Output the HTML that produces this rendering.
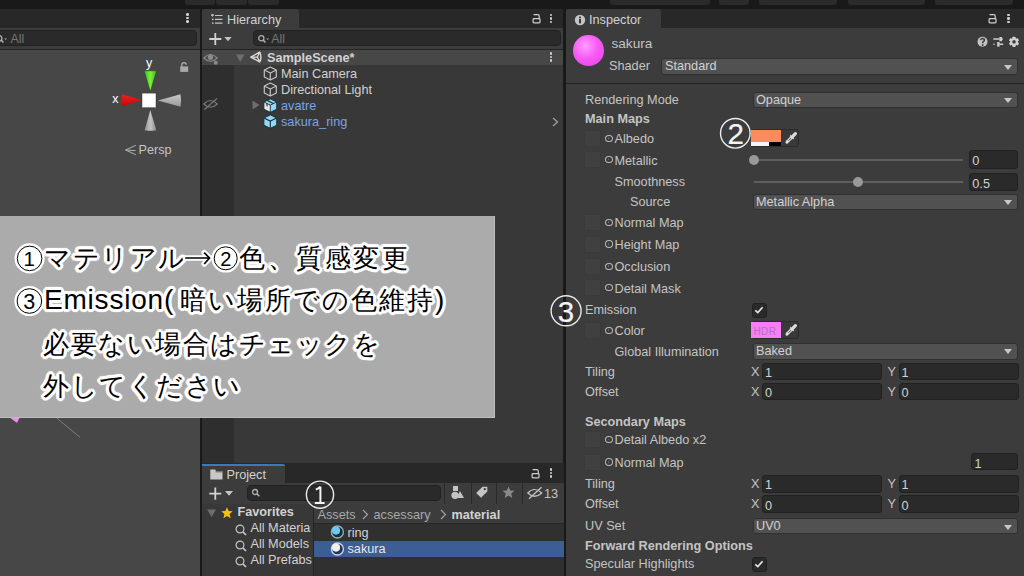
<!DOCTYPE html>
<html><head><meta charset="utf-8">
<style>
*{box-sizing:border-box;margin:0;padding:0}
html,body{width:1024px;height:576px;overflow:hidden;background:#191919}
body{position:relative;font-family:"Liberation Sans",sans-serif;color:#c4c4c4;font-size:12.7px}
.a{position:absolute}
.t{position:absolute;white-space:nowrap;line-height:16px;height:16px;margin-top:0px}
.b{font-weight:bold}
.tbtn{position:absolute;top:-6px;height:10.5px;background:#2b2b2b;border-radius:0 0 3px 3px}
.tabbar{position:absolute;background:#282828}
.tab{position:absolute;background:#3c3c3c;border-radius:3px 3px 0 0}
.tool{position:absolute;background:#3c3c3c;border-bottom:1.5px solid #232323}
.search{position:absolute;background:#2a2a2a;border:1px solid #212121;border-radius:4px}
.kebab{position:absolute;width:3px;height:11px}
.kebab i{position:absolute;left:0.3px;width:2.5px;height:2.5px;border-radius:50%;background:#d0d0d0}
.dd{position:absolute;background:#515151;border:1px solid #303030;border-radius:3px;height:17px}
.dd span{position:absolute;left:2px;top:0;line-height:15px;color:#d2d2d2}
.dd b{position:absolute;right:5px;top:5.5px;width:0;height:0;border-left:4.3px solid transparent;border-right:4.3px solid transparent;border-top:5.2px solid #c8c8c8}
.fld{position:absolute;background:#2a2a2a;border:1px solid #212121;border-radius:3px;height:18px}
.fld span{position:absolute;left:2px;top:1.5px;line-height:16px;color:#d2d2d2}
.slot{position:absolute;left:584.3px;width:17px;height:17px;background:#404040;border:1px solid #3a3a3a}
.dot{position:absolute;width:7.8px;height:7.6px;border:1.5px solid #b8b8b8;border-radius:50%}
.dot:after{content:"";position:absolute;left:1.9px;top:1.9px;width:1.6px;height:1.6px;background:#707070;border-radius:50%}
.chk{position:absolute;width:15px;height:15px;background:#2a2a2a;border:1px solid #212121;border-radius:3px}
.ann{position:absolute;width:30px;height:30px;border-radius:50%;border:2px solid #fff;background:transparent}
</style></head><body>

<!-- top toolbar buttons -->
<div class="tbtn" style="left:185px;width:30px"></div>
<div class="tbtn" style="left:216px;width:31px"></div>
<div class="tbtn" style="left:248px;width:31px"></div>
<div class="tbtn" style="left:610px;width:99.5px"></div>
<div class="tbtn" style="left:719px;width:30px"></div>
<div class="tbtn" style="left:759px;width:78px"></div>
<div class="tbtn" style="left:847.5px;width:77.5px"></div>
<div class="tbtn" style="left:935px;width:78px"></div>

<!-- ============ SCENE PANEL ============ -->
<div class="tabbar" style="left:0;top:9px;width:200px;height:19px"></div>
<div class="kebab" style="left:186px;top:13px"><i style="top:0"></i><i style="top:3.7px"></i><i style="top:7.4px"></i></div>
<div class="tool" style="left:0;top:28px;width:200px;height:22px"></div>
<div class="search" style="left:-10px;top:30px;width:207px;height:16px"></div>
<div class="t" style="left:10.5px;top:31px;color:#767676;font-size:12.3px">All</div>
<div class="a" style="left:0;top:50px;width:200px;height:526px;background:#474747"></div>
<!-- scene toolbar search icon -->
<svg class="a" style="left:-3px;top:33.5px" width="12" height="11" viewBox="0 0 12 11"><circle cx="2.3" cy="4.3" r="2.6" fill="none" stroke="#b0b0b0" stroke-width="1.3"/><path d="M4.2 6.2 L6.4 8.4" stroke="#b0b0b0" stroke-width="1.6"/><path d="M7.3 4.5 H10 L8.65 6 Z" fill="#b0b0b0"/></svg>
<!-- gizmo -->
<svg class="a" style="left:105px;top:52px" width="90" height="108" viewBox="105 52 90 108">
 <defs>
  <linearGradient id="gg" x1="0" y1="0" x2="1" y2="0"><stop offset="0" stop-color="#3cc21a"/><stop offset="0.5" stop-color="#78f03c"/><stop offset="1" stop-color="#3cb818"/></linearGradient>
  <linearGradient id="rg" x1="0" y1="0" x2="0" y2="1"><stop offset="0" stop-color="#f02020"/><stop offset="1" stop-color="#c00808"/></linearGradient>
  <linearGradient id="wg" x1="0" y1="0" x2="0" y2="1"><stop offset="0" stop-color="#c8c8c8"/><stop offset="1" stop-color="#9a9a9a"/></linearGradient>
  <linearGradient id="bg2" x1="0" y1="0" x2="1" y2="0"><stop offset="0" stop-color="#909090"/><stop offset="0.5" stop-color="#c4c4c4"/><stop offset="1" stop-color="#8c8c8c"/></linearGradient>
 </defs>
 <path d="M144.3 70.8 L156.6 70.8 L150.3 91.5 Z" fill="url(#gg)" stroke="#2a4a1a" stroke-width="0.5"/>
 <path d="M122.2 94.2 L141.8 100.1 L122.2 106.2 Q120.8 100.2 122.2 94.2 Z" fill="url(#rg)"/>
 <path d="M180.5 94.2 L158 100.4 L180.5 106.7 Q181.8 100.4 180.5 94.2 Z" fill="url(#wg)"/>
 <path d="M150.3 109.9 L156.3 130.2 Q150.3 131.5 144.6 130.2 Z" fill="url(#bg2)"/>
 <rect x="142" y="93.1" width="14" height="14.6" fill="#ffffff" stroke="#222" stroke-width="0.4"/>
 <text x="149" y="67.3" font-family="Liberation Sans" font-size="12.5" fill="#fff" text-anchor="middle">y</text>
 <text x="115.4" y="103" font-family="Liberation Sans" font-size="12.5" fill="#fff" text-anchor="middle">x</text>
 <path d="M181.8 67 V64.8 Q181.8 62.8 184 62.8 Q186.2 62.8 186.2 64.8" fill="none" stroke="#a8a8a8" stroke-width="1.4"/>
 <rect x="180.2" y="66.4" width="8" height="5.5" fill="#a8a8a8"/>
 <path d="M135.8 145.3 L125.6 150 L135.8 154.7 M125.6 150 L135.5 150.6" fill="none" stroke="#b4b4b4" stroke-width="1"/>
</svg>
<div class="t" style="left:138.5px;top:142.3px;color:#c4c4c4">Persp</div>
<svg class="a" style="left:0;top:410px" width="100" height="40" viewBox="0 410 100 40"><path d="M8.6 417 L20.3 417 L17 423.2 Z" fill="#f58cf3" stroke="#3a2a3a" stroke-width="0.4"/><path d="M56 417.5 L80 437.3" stroke="#8c8c8c" stroke-width="0.8"/></svg>


<!-- separator -->
<div class="a" style="left:200px;top:9px;width:2px;height:567px;background:#191919"></div>

<!-- ============ HIERARCHY ============ -->
<div class="tabbar" style="left:202px;top:9px;width:361px;height:19px"></div>
<div class="tab" style="left:202px;top:9px;width:97px;height:19px"></div>
<div class="t" style="left:227px;top:12px;color:#d2d2d2">Hierarchy</div>
<div class="tool" style="left:202px;top:28px;width:361px;height:22px"></div>
<div class="search" style="left:253px;top:30px;width:308px;height:16px"></div>
<div class="t" style="left:271.3px;top:31px;color:#767676;font-size:12.3px">All</div>
<div class="a" style="left:202px;top:50px;width:361px;height:413px;background:#383838"></div>
<div class="a" style="left:202px;top:65px;width:32px;height:398px;background:#2e2e2e"></div>
<div class="a" style="left:202px;top:50px;width:361px;height:15px;background:#474747"></div>
<div class="t b" style="left:267px;top:49.5px;color:#d2d2d2">SampleScene*</div>
<div class="t" style="left:281px;top:66px;color:#d2d2d2">Main Camera</div>
<div class="t" style="left:281px;top:82px;color:#d2d2d2">Directional Light</div>
<div class="t" style="left:281px;top:98px;color:#7ba4e0">avatre</div>
<div class="t" style="left:281px;top:114px;color:#7ba4e0">sakura_ring</div>
<!-- hierarchy icons -->
<svg class="a" style="left:210px;top:14px" width="13" height="11" viewBox="0 0 13 11"><path d="M1 1.2 H4 M2.5 0 V2.6 M5 1.5 H12.5 M5 5.3 H12.5 M5 9.1 H12.5" stroke="#c4c4c4" stroke-width="1.2"/><rect x="2" y="4.6" width="1.5" height="1.5" fill="#c4c4c4"/><rect x="2" y="8.4" width="1.5" height="1.5" fill="#c4c4c4"/></svg>
<svg class="a" style="left:529.5px;top:12px" width="12" height="13" viewBox="0 0 12 13"><path d="M3.6 2.6 H7.6 Q9.3 2.6 9.3 4.4 V6.6" fill="none" stroke="#d0d0d0" stroke-width="1.2"/><rect x="3.1" y="6.7" width="6.9" height="4.2" rx="0.8" fill="none" stroke="#d0d0d0" stroke-width="1.2"/></svg>
<div class="kebab" style="left:549.5px;top:13.5px"><i style="top:0"></i><i style="top:3.7px"></i><i style="top:7.4px"></i></div>
<svg class="a" style="left:208px;top:32.3px" width="26" height="14" viewBox="0 0 26 14"><path d="M7.3 1 V13 M1.3 7 H13.3" stroke="#d2d2d2" stroke-width="1.8"/><path d="M16.3 5 H23.7 L20 9.2 Z" fill="#c4c4c4"/></svg>
<svg class="a" style="left:257px;top:33.5px" width="14" height="11" viewBox="0 0 14 11"><circle cx="4.3" cy="4.3" r="2.6" fill="none" stroke="#b0b0b0" stroke-width="1.3"/><path d="M6.2 6.2 L8.4 8.4" stroke="#b0b0b0" stroke-width="1.6"/><path d="M9.3 4.5 H12 L10.65 6 Z" fill="#b0b0b0"/></svg>
<!-- scene row icons -->
<svg class="a" style="left:203px;top:52px" width="16" height="13" viewBox="0 0 16 13"><path d="M0.8 6 Q7.5 -1 14.3 6 Q7.5 12.5 0.8 6 Z" fill="none" stroke="#8a8a8a" stroke-width="1.1"/><circle cx="7.5" cy="5.3" r="2.7" fill="#8a8a8a"/><rect x="11" y="9" width="3.5" height="3.5" rx="0.5" fill="#8a8a8a"/></svg>
<svg class="a" style="left:236px;top:54px" width="9" height="9" viewBox="0 0 9 9"><path d="M0 0.5 H8.5 L4.25 8 Z" fill="#6e6e6e"/></svg>
<svg class="a" style="left:246px;top:48px" width="20" height="18" viewBox="246 48 20 18"><path d="M250.8 57.1 L259.7 52.1 Q262.2 57.1 259.7 61.9 Z" fill="none" stroke="#dcdcdc" stroke-width="1.4" stroke-linejoin="round"/><path d="M257.4 57.1 L250.8 57.1 M257.4 57.1 L259.7 52.1 M257.4 57.1 L259.7 61.9" stroke="#dcdcdc" stroke-width="1.3"/></svg>
<div class="kebab" style="left:549.5px;top:52px"><i style="top:0"></i><i style="top:3.7px"></i><i style="top:7.4px"></i></div>
<!-- cubes -->
<svg class="a" style="left:263px;top:66px" width="15" height="15" viewBox="0 0 15 15"><path d="M7.3 1 L13.3 4 V11 L7.3 14 L1.3 11 V4 Z M1.3 4 L7.3 7 L13.3 4 M7.3 7 V14" fill="none" stroke="#c4c4c4" stroke-width="1.2" stroke-linejoin="round"/></svg>
<svg class="a" style="left:263px;top:82px" width="15" height="15" viewBox="0 0 15 15"><path d="M7.3 1 L13.3 4 V11 L7.3 14 L1.3 11 V4 Z M1.3 4 L7.3 7 L13.3 4 M7.3 7 V14" fill="none" stroke="#c4c4c4" stroke-width="1.2" stroke-linejoin="round"/></svg>
<svg class="a" style="left:263px;top:98px" width="15" height="15" viewBox="0 0 15 15"><path d="M7.3 0.9 L13.7 4 V11.2 L7.3 14.3 L0.9 11.2 V4 Z" fill="#8edaf8" stroke="#1e2e36" stroke-width="0.9" stroke-linejoin="round"/><path d="M0.9 4 L7.3 7.1 V14.3 L0.9 11.2 Z" fill="#e8e8e8" stroke="#1e2e36" stroke-width="0.9" stroke-linejoin="round"/><path d="M7.3 7.1 L13.7 4" stroke="#1e2e36" stroke-width="0.9"/><path d="M4.2 2.4 L10.4 5.5" stroke="#1e2e36" stroke-width="1.2"/><path d="M3.4 5.2 V8 L4.6 8.5 V5.8 Z" fill="#303030"/></svg>
<svg class="a" style="left:263px;top:114px" width="15" height="15" viewBox="0 0 15 15"><path d="M7.3 0.9 L13.7 4 V11.2 L7.3 14.3 L0.9 11.2 V4 Z" fill="#8edaf8" stroke="#1e2e36" stroke-width="0.9" stroke-linejoin="round"/><path d="M0.9 4 L7.3 7.1 L13.7 4 M7.3 7.1 V14.3" fill="none" stroke="#1e2e36" stroke-width="1.1"/></svg>
<svg class="a" style="left:252px;top:100px" width="8" height="10" viewBox="0 0 8 10"><path d="M0.5 0.5 L7.5 5 L0.5 9.5 Z" fill="#6e6e6e"/></svg>
<svg class="a" style="left:203px;top:97px" width="16" height="14" viewBox="0 0 16 14"><path d="M0.8 7 Q7.5 0 14.3 7 Q7.5 13.5 0.8 7 Z" fill="none" stroke="#7a7a7a" stroke-width="1.1"/><path d="M1.5 12.5 L14 1.5" stroke="#7a7a7a" stroke-width="1.2"/></svg>
<svg class="a" style="left:552px;top:117px" width="7" height="10" viewBox="0 0 7 10"><path d="M1 1 L5.5 5 L1 9" fill="none" stroke="#a0a0a0" stroke-width="1.3"/></svg>


<!-- separator -->
<div class="a" style="left:563px;top:9px;width:3px;height:567px;background:#191919"></div>

<!-- ============ INSPECTOR ============ -->
<div class="tabbar" style="left:566px;top:9px;width:458px;height:19px"></div>
<div class="tab" style="left:566px;top:9px;width:95px;height:19px"></div>
<div class="t" style="left:589px;top:12px;color:#d2d2d2">Inspector</div>
<div class="a" style="left:566px;top:28px;width:458px;height:548px;background:#3c3c3c"></div>
<div class="a" style="left:566px;top:83px;width:458px;height:1px;background:#232323"></div>
<!-- inspector header -->
<div class="a" style="left:573px;top:35px;width:30.5px;height:30.5px;border-radius:50%;background:radial-gradient(circle at 40% 35%,#ff9cff 0%,#f75cf5 45%,#e83ce6 100%)"></div>
<div class="t" style="left:611.5px;top:36px;font-size:13.6px;color:#c4c4c4">sakura</div>
<div class="t" style="left:609px;top:58.3px;color:#c4c4c4">Shader</div>
<div class="dd" style="left:661px;top:58px;width:357px;height:16.5px"><span style="left:3px">Standard</span><b></b></div>
<!-- help / preset / gear icons -->
<svg class="a" style="left:976px;top:35px" width="46" height="14" viewBox="0 0 46 14">
 <circle cx="6.5" cy="6.8" r="5" fill="#c4c4c4"/>
 <path d="M4.8 5.3 Q4.8 3.4 6.6 3.4 Q8.4 3.4 8.4 5.1 Q8.4 6.2 7.1 6.8 L6.7 7.2 L6.7 8.2" fill="none" stroke="#3c3c3c" stroke-width="1.5"/>
 <circle cx="6.7" cy="10" r="0.9" fill="#3c3c3c"/>
 <path d="M17.3 3.9 H23.6 M23.4 9.3 H27.2" stroke="#d0d0d0" stroke-width="1.5"/>
 <path d="M23.4 2 H25.6 L26.9 4.1 L25.6 6.2 H23.4 Z" fill="#d0d0d0"/>
 <rect x="21.2" y="7" width="2.4" height="4.6" fill="#d0d0d0"/>
 <circle cx="18.1" cy="9.3" r="0.8" fill="#d0d0d0"/>
 <g transform="translate(38,6.8)" fill="#d0d0d0">
  <circle r="3.9"/>
  <rect x="-1.5" y="-5.1" width="3" height="10.2" rx="0.6"/>
  <rect x="-1.5" y="-5.1" width="3" height="10.2" rx="0.6" transform="rotate(60)"/>
  <rect x="-1.5" y="-5.1" width="3" height="10.2" rx="0.6" transform="rotate(120)"/>
  <rect x="-1.6" y="-1.6" width="3.2" height="3.2" rx="1" fill="#3c3c3c"/>
 </g>
</svg>
<!-- tab icons -->
<svg class="a" style="left:574px;top:14px" width="12" height="12" viewBox="0 0 12 12"><circle cx="6" cy="6" r="5.2" fill="#c4c4c4"/><rect x="5.1" y="5" width="1.8" height="4.3" fill="#282828"/><rect x="5.1" y="2.6" width="1.8" height="1.6" fill="#282828"/></svg>
<svg class="a" style="left:986px;top:12px" width="12" height="13" viewBox="0 0 12 13"><path d="M3.6 2.6 H7.6 Q9.3 2.6 9.3 4.4 V6.6" fill="none" stroke="#d0d0d0" stroke-width="1.2"/><rect x="3.1" y="6.7" width="6.9" height="4.2" rx="0.8" fill="none" stroke="#d0d0d0" stroke-width="1.2"/></svg>
<div class="kebab" style="left:1007px;top:13.5px"><i style="top:0"></i><i style="top:3.7px"></i><i style="top:7.4px"></i></div>

<div class="t" style="left:585px;top:91.9px">Rendering Mode</div>
<div class="t b" style="left:585px;top:111.15px">Main Maps</div>
<div class="t" style="left:614.5px;top:131.15px">Albedo</div>
<div class="slot" style="top:130px"></div>
<div class="dot" style="left:605px;top:134.5px"></div>
<div class="t" style="left:614.5px;top:152.55px">Metallic</div>
<div class="slot" style="top:151.4px"></div>
<div class="dot" style="left:605px;top:155.9px"></div>
<div class="t" style="left:614.5px;top:174.15px">Smoothness</div>
<div class="t" style="left:630px;top:194.15px">Source</div>
<div class="t" style="left:614.5px;top:215.15px">Normal Map</div>
<div class="slot" style="top:214px"></div>
<div class="dot" style="left:605px;top:218.5px"></div>
<div class="t" style="left:614.5px;top:236.75px">Height Map</div>
<div class="slot" style="top:235.6px"></div>
<div class="dot" style="left:605px;top:240.1px"></div>
<div class="t" style="left:614.5px;top:259.15px">Occlusion</div>
<div class="slot" style="top:258px"></div>
<div class="dot" style="left:605px;top:262.5px"></div>
<div class="t" style="left:614.5px;top:280.55px">Detail Mask</div>
<div class="slot" style="top:279.4px"></div>
<div class="dot" style="left:605px;top:283.9px"></div>
<div class="t" style="left:585px;top:302.15px">Emission</div>
<div class="t" style="left:614.5px;top:323.15px">Color</div>
<div class="slot" style="top:322px"></div>
<div class="dot" style="left:605px;top:326.5px"></div>
<div class="t" style="left:614.5px;top:343.75px">Global Illumination</div>
<div class="t" style="left:585px;top:363.75px">Tiling</div>
<div class="t" style="left:585px;top:383.75px">Offset</div>
<div class="t b" style="left:585px;top:413.75px">Secondary Maps</div>
<div class="t" style="left:614.5px;top:432.35px">Detail Albedo x2</div>
<div class="slot" style="top:431.2px"></div>
<div class="dot" style="left:605px;top:435.7px"></div>
<div class="t" style="left:614.5px;top:455.05px">Normal Map</div>
<div class="slot" style="top:453.9px"></div>
<div class="dot" style="left:605px;top:458.4px"></div>
<div class="t" style="left:585px;top:476.15px">Tiling</div>
<div class="t" style="left:585px;top:496.15px">Offset</div>
<div class="t" style="left:585px;top:518.15px">UV Set</div>
<div class="t b" style="left:585px;top:537.55px">Forward Rendering Options</div>
<div class="t" style="left:585px;top:555.85px">Specular Highlights</div>

<!-- dropdowns -->
<div class="dd" style="left:753px;top:91.5px;width:265px;height:16.5px"><span>Opaque</span><b></b></div>
<div class="dd" style="left:753px;top:193.7px;width:265px;height:16.5px"><span>Metallic Alpha</span><b></b></div>
<div class="dd" style="left:753px;top:342.5px;width:265px;height:17px"><span>Baked</span><b></b></div>
<div class="dd" style="left:753px;top:518px;width:265px;height:16px"><span>UV0</span><b></b></div>

<!-- albedo swatch -->
<div class="a" style="left:750.5px;top:128.8px;width:48.5px;height:17.8px;background:#393939;border:1px solid #2b2b2b;border-radius:3px"></div>
<div class="a" style="left:751.3px;top:129.6px;width:29.8px;height:12px;background:#fa8b5c"></div>
<div class="a" style="left:751.3px;top:141.6px;width:17.5px;height:4.4px;background:#f4f4f4"></div>
<div class="a" style="left:768.8px;top:141.6px;width:12.3px;height:4.4px;background:#000"></div>
<!-- emission swatch -->
<div class="a" style="left:750.5px;top:320.8px;width:48.5px;height:17.8px;background:#393939;border:1px solid #2b2b2b;border-radius:3px"></div>
<div class="a" style="left:751.3px;top:321.6px;width:29.8px;height:16.4px;background:#f77ff5"></div>
<div class="t" style="left:753.6px;top:323.6px;font-size:10px;letter-spacing:0.3px;color:#b272bc">HDR</div>
<!-- eyedroppers -->
<svg class="a" style="left:783px;top:129.5px" width="15" height="16" viewBox="0 0 15 16"><path d="M3.9 12.1 L8.6 7.4" stroke="#dcdcdc" stroke-width="2.9" stroke-linecap="round"/><path d="M5.6 10.4 L7.6 8.4" stroke="#3a3a3a" stroke-width="0.9" stroke-linecap="round"/><path d="M7.2 5.3 L10.7 8.8" stroke="#dcdcdc" stroke-width="1.7"/><path d="M10 6.1 L12.4 3.7" stroke="#dcdcdc" stroke-width="3.2" stroke-linecap="round"/></svg>
<svg class="a" style="left:783px;top:321.5px" width="15" height="16" viewBox="0 0 15 16"><path d="M3.9 12.1 L8.6 7.4" stroke="#dcdcdc" stroke-width="2.9" stroke-linecap="round"/><path d="M5.6 10.4 L7.6 8.4" stroke="#3a3a3a" stroke-width="0.9" stroke-linecap="round"/><path d="M7.2 5.3 L10.7 8.8" stroke="#dcdcdc" stroke-width="1.7"/><path d="M10 6.1 L12.4 3.7" stroke="#dcdcdc" stroke-width="3.2" stroke-linecap="round"/></svg>

<!-- sliders -->
<div class="a" style="left:754px;top:159px;width:209px;height:2px;background:#5e5e5e"></div>
<div class="a" style="left:749.3px;top:155px;width:10px;height:10px;border-radius:50%;background:#999"></div>
<div class="fld" style="left:969.3px;top:150px;width:48.7px;height:18.7px"><span>0</span></div>
<div class="a" style="left:754px;top:181px;width:209px;height:2px;background:#5e5e5e"></div>
<div class="a" style="left:852.5px;top:176.8px;width:10px;height:10px;border-radius:50%;background:#999"></div>
<div class="fld" style="left:969.3px;top:173px;width:48.7px;height:17.5px"><span>0.5</span></div>

<!-- checkboxes -->
<div class="chk" style="left:752px;top:302.5px"></div>
<svg class="a" style="left:752px;top:302.5px" width="14" height="14" viewBox="0 0 14 14"><path d="M3.3 7.3 L5.8 9.6 L10.6 4.2" fill="none" stroke="#e6e6e6" stroke-width="1.7"/></svg>
<div class="chk" style="left:752px;top:557px"></div>
<svg class="a" style="left:752px;top:557px" width="14" height="14" viewBox="0 0 14 14"><path d="M3.3 7.3 L5.8 9.6 L10.6 4.2" fill="none" stroke="#e6e6e6" stroke-width="1.7"/></svg>

<!-- tiling / offset fields -->
<div class="t" style="left:751px;top:363.7px">X</div><div class="fld" style="left:762px;top:362.5px;width:120px;height:17.5px"><span style="left:2px">1</span></div>
<div class="t" style="left:887.5px;top:363.7px">Y</div><div class="fld" style="left:898.5px;top:362.5px;width:120px;height:17.5px"><span style="left:2px">1</span></div>
<div class="t" style="left:751px;top:383.7px">X</div><div class="fld" style="left:762px;top:382.5px;width:120px;height:17.5px"><span style="left:2px">0</span></div>
<div class="t" style="left:887.5px;top:383.7px">Y</div><div class="fld" style="left:898.5px;top:382.5px;width:120px;height:17.5px"><span style="left:2px">0</span></div>
<div class="fld" style="left:970.5px;top:453.3px;width:47.5px;height:17.2px"><span style="left:3px">1</span></div>
<div class="t" style="left:751px;top:476px">X</div><div class="fld" style="left:762px;top:474.5px;width:120px;height:18px"><span style="left:2px">1</span></div>
<div class="t" style="left:887.5px;top:476px">Y</div><div class="fld" style="left:898.5px;top:474.5px;width:120px;height:18px"><span style="left:2px">1</span></div>
<div class="t" style="left:751px;top:496px">X</div><div class="fld" style="left:762px;top:495px;width:120px;height:17.5px"><span style="left:2px">0</span></div>
<div class="t" style="left:887.5px;top:496px">Y</div><div class="fld" style="left:898.5px;top:495px;width:120px;height:17.5px"><span style="left:2px">0</span></div>


<!-- ============ PROJECT ============ -->
<div class="tabbar" style="left:202px;top:462.5px;width:361.5px;height:20px"></div>
<div class="tab" style="left:202px;top:463.8px;width:83px;height:19.7px;border-top:2.5px solid #3a79bb;border-radius:0 2px 0 0"></div>
<div class="t" style="left:226.5px;top:467px;color:#d2d2d2">Project</div>
<div class="a" style="left:563.5px;top:463px;width:2.5px;height:113px;background:#191919"></div>
<svg class="a" style="left:210px;top:469px" width="13" height="11" viewBox="0 0 13 11"><path d="M0.3 0.5 H5 L6.2 2 H12.5 V10.5 H0.3 Z" fill="#c8c8c8"/><path d="M5.5 2.8 H12.5" stroke="#3c3c3c" stroke-width="0.8"/></svg>
<svg class="a" style="left:528.5px;top:467px" width="12" height="13" viewBox="0 0 12 13"><path d="M3.6 2.6 H7.6 Q9.3 2.6 9.3 4.4 V6.6" fill="none" stroke="#d0d0d0" stroke-width="1.2"/><rect x="3.1" y="6.7" width="6.9" height="4.2" rx="0.8" fill="none" stroke="#d0d0d0" stroke-width="1.2"/></svg>
<div class="kebab" style="left:549.5px;top:468px"><i style="top:0"></i><i style="top:3.7px"></i><i style="top:7.4px"></i></div>
<!-- project toolbar -->
<div class="tool" style="left:202px;top:482.5px;width:361.5px;height:22px"></div>
<svg class="a" style="left:208px;top:487px" width="26" height="14" viewBox="0 0 26 14"><path d="M7.3 0.5 V12.8 M1.3 6.7 H13.3" stroke="#d2d2d2" stroke-width="1.8"/><path d="M17 4 H25 L21 8.8 Z" fill="#c4c4c4"/></svg>
<div class="search" style="left:247px;top:485px;width:194px;height:16px"></div>
<svg class="a" style="left:251px;top:488px" width="10" height="10" viewBox="0 0 10 10"><circle cx="4" cy="4" r="2.5" fill="none" stroke="#b0b0b0" stroke-width="1.3"/><path d="M5.8 5.8 L8.3 8.3" stroke="#b0b0b0" stroke-width="1.6"/></svg>
<div class="a" style="left:444px;top:482.5px;width:1px;height:21px;background:#2a2a2a"></div>
<div class="a" style="left:470.5px;top:482.5px;width:1px;height:21px;background:#2a2a2a"></div>
<div class="a" style="left:496px;top:482.5px;width:1px;height:21px;background:#2a2a2a"></div>
<div class="a" style="left:522px;top:482.5px;width:1px;height:21px;background:#2a2a2a"></div>
<svg class="a" style="left:450px;top:485px" width="15" height="15" viewBox="0 0 15 15"><rect x="3" y="1" width="5" height="5" fill="#c4c4c4"/><circle cx="5" cy="10.3" r="3.6" fill="#c4c4c4"/><path d="M10 6 L14 13 H6.5 Z" fill="#c4c4c4"/></svg>
<svg class="a" style="left:475px;top:485px" width="14" height="14" viewBox="0 0 14 14"><path d="M1.2 8 L7.5 1.7 H12.3 V6.5 L6 12.8 Z" fill="#c4c4c4"/><circle cx="9.8" cy="4.2" r="1.1" fill="#3c3c3c"/></svg>
<svg class="a" style="left:502px;top:486px" width="13" height="13" viewBox="0 0 13 13"><path d="M6.5 0.6 L8.2 4.6 L12.5 4.8 L9.2 7.6 L10.3 12 L6.5 9.6 L2.7 12 L3.8 7.6 L0.5 4.8 L4.8 4.6 Z" fill="#8a8a8a"/></svg>
<svg class="a" style="left:527px;top:486px" width="16" height="14" viewBox="0 0 16 14"><path d="M0.8 7 Q7.5 0 14.8 7 Q7.5 13.5 0.8 7 Z" fill="none" stroke="#c4c4c4" stroke-width="1.2"/><path d="M2 12.8 L14.5 1.2" stroke="#c4c4c4" stroke-width="1.3"/></svg>
<div class="t" style="left:544px;top:485.8px;color:#c4c4c4">13</div>
<!-- project left pane -->
<div class="a" style="left:202px;top:504px;width:111px;height:72px;background:#383838"></div>
<div class="a" style="left:313px;top:504px;width:1px;height:72px;background:#242424"></div>
<svg class="a" style="left:206.5px;top:508.5px" width="10" height="9" viewBox="0 0 10 9"><path d="M0.2 0.5 H9 L4.6 8 Z" fill="#6e6e6e"/></svg>
<svg class="a" style="left:220.5px;top:506.5px" width="12" height="12" viewBox="0 0 12 12"><path d="M6 0.3 L7.7 4 L11.7 4.3 L8.6 6.9 L9.6 11.3 L6 9 L2.4 11.3 L3.4 6.9 L0.3 4.3 L4.3 4 Z" fill="#f4c20d"/></svg>
<div class="t b" style="left:237.5px;top:504px;color:#d2d2d2">Favorites</div>
<div style="position:absolute;left:234px;top:520px;width:79px;height:48px;overflow:hidden">
<svg class="a" style="left:0.5px;top:3.5px" width="13" height="12" viewBox="0 0 13 12"><circle cx="5" cy="5" r="3.9" fill="none" stroke="#c4c4c4" stroke-width="1.2"/><path d="M7.9 7.9 L11 11" stroke="#c4c4c4" stroke-width="1.7"/></svg>
<svg class="a" style="left:0.5px;top:19.5px" width="13" height="12" viewBox="0 0 13 12"><circle cx="5" cy="5" r="3.9" fill="none" stroke="#c4c4c4" stroke-width="1.2"/><path d="M7.9 7.9 L11 11" stroke="#c4c4c4" stroke-width="1.7"/></svg>
<svg class="a" style="left:0.5px;top:35.5px" width="13" height="12" viewBox="0 0 13 12"><circle cx="5" cy="5" r="3.9" fill="none" stroke="#c4c4c4" stroke-width="1.2"/><path d="M7.9 7.9 L11 11" stroke="#c4c4c4" stroke-width="1.7"/></svg>
<div class="t" style="left:16.5px;top:0px;color:#d2d2d2">All Materia</div>
<div class="t" style="left:16.5px;top:16px;color:#d2d2d2">All Models</div>
<div class="t" style="left:16.5px;top:32px;color:#d2d2d2">All Prefabs</div>
</div>
<!-- project right pane -->
<div class="a" style="left:314px;top:504px;width:249.5px;height:20px;background:#3c3c3c;border-bottom:1px solid #262626"></div>
<div class="a" style="left:314px;top:524px;width:249.5px;height:52px;background:#303030"></div>
<div class="t" style="left:317.5px;top:506.7px;color:#a8a8a8">Assets</div>
<svg class="a" style="left:362px;top:509px" width="7" height="11" viewBox="0 0 7 11"><path d="M1 1 L5.5 5.5 L1 10" fill="none" stroke="#a0a0a0" stroke-width="1.2"/></svg>
<div class="t" style="left:373.5px;top:506.7px;color:#a8a8a8">acsessary</div>
<svg class="a" style="left:440px;top:509px" width="7" height="11" viewBox="0 0 7 11"><path d="M1 1 L5.5 5.5 L1 10" fill="none" stroke="#a0a0a0" stroke-width="1.2"/></svg>
<div class="t b" style="left:451.5px;top:506.7px;color:#d2d2d2">material</div>
<div class="a" style="left:314px;top:541px;width:249.5px;height:16px;background:#3c5e95"></div>
<svg class="a" style="left:329.5px;top:525.3px" width="15" height="15" viewBox="0 0 15 15"><circle cx="7.4" cy="7" r="6" fill="#1c2a32" stroke="#8fb4c4" stroke-width="1.3"/><circle cx="6" cy="5.6" r="4.1" fill="#6cc8f0"/></svg>
<svg class="a" style="left:329.5px;top:541.5px" width="15" height="15" viewBox="0 0 15 15"><circle cx="7.4" cy="7" r="6" fill="#22375a" stroke="#c8d8f0" stroke-width="1.3"/><circle cx="6" cy="5.6" r="4.1" fill="#f2eeee"/></svg>
<div class="t" style="left:347.5px;top:525px;color:#d2d2d2">ring</div>
<div class="t" style="left:347.5px;top:541px;color:#e6e6e6">sakura</div>


<!-- ============ OVERLAY ============ -->
<div class="a" style="left:0;top:216px;width:495.3px;height:201.6px;background:#ababab;box-shadow:inset -1px -1px 0 #bdbdbd"></div>
<style>
.jp{position:absolute;white-space:nowrap;font-size:26px;letter-spacing:1.5px;line-height:42px;height:42px;color:#000;text-shadow:3.10px 0.00px 0.7px #fff,2.86px 1.19px 0.7px #fff,2.19px 2.19px 0.7px #fff,1.19px 2.86px 0.7px #fff,0.00px 3.10px 0.7px #fff,-1.19px 2.86px 0.7px #fff,-2.19px 2.19px 0.7px #fff,-2.86px 1.19px 0.7px #fff,-3.10px 0.00px 0.7px #fff,-2.86px -1.19px 0.7px #fff,-2.19px -2.19px 0.7px #fff,-1.19px -2.86px 0.7px #fff,-0.00px -3.10px 0.7px #fff,1.19px -2.86px 0.7px #fff,2.19px -2.19px 0.7px #fff,2.86px -1.19px 0.7px #fff}
</style>
<div class="jp" id="s1" style="left:44px;top:237px">マテリアル</div>
<div class="jp" id="s2" style="left:239px;top:237px;letter-spacing:2.5px">色、質感変更</div>
<div class="jp jl" id="s3" style="left:44px;top:279px">Emission(</div>
<div class="jp" id="s4" style="left:180px;top:279px;letter-spacing:2px">暗い場所での色維持<span class="jl">)</span></div>
<div class="jp" id="s5" style="left:43px;top:322.5px">必要ない場合はチェックを</div>
<div class="jp" id="s6" style="left:43px;top:365px">外してください</div>
<style>.jl{font-size:28px;letter-spacing:0.8px}</style>
<svg class="a" style="left:0;top:216px" width="495" height="202" viewBox="0 216 495 202">
 <g fill="none" stroke="#fff" stroke-width="5.5" stroke-linecap="round" stroke-linejoin="round">
  <circle cx="29.6" cy="258.4" r="12.3" fill="#fff"/>
  <circle cx="225.7" cy="258.3" r="11.5" fill="#fff"/>
  <circle cx="29.4" cy="301" r="12.3" fill="#fff"/>
  <path d="M185.2 258 H210 M204.2 252.7 L210 258 L204.2 264"/>
 </g>
 <g fill="none" stroke="#000" stroke-width="1">
  <circle cx="29.6" cy="258.4" r="12.3"/>
  <circle cx="225.7" cy="258.3" r="11.5"/>
  <circle cx="29.4" cy="301" r="12.3"/>
 </g>
 <path d="M185.2 258 H209.5 M204.2 252.7 L209.5 258 L204.2 264" fill="none" stroke="#000" stroke-width="1.7"/>
 <g font-family="Liberation Sans" fill="#000" text-anchor="middle">
  <text x="29.2" y="266.1" font-size="20.5">1</text>
  <text x="225.9" y="265.9" font-size="20">2</text>
  <text x="29.3" y="308.9" font-size="21.5">3</text>
 </g>
</svg>



<!-- annotations -->
<svg class="a" style="left:0;top:0" width="1024" height="576" viewBox="0 0 1024 576">
 <g fill="none" stroke="#ececec" stroke-width="1.4">
  <circle cx="735.3" cy="133.3" r="14.8"/>
  <circle cx="566.1" cy="310.8" r="15"/>
  <circle cx="320" cy="494.7" r="13.6"/>
 </g>
 <g font-family="Liberation Sans" fill="#f4f4f4" stroke="#f4f4f4" stroke-width="0.2" text-anchor="middle" font-size="29.5">
  <text x="735.8" y="144">2</text>
  <text x="566" y="322.3">3</text>
 </g>
 <path d="M320.4 486.6 V502.9 M315.8 489.6 Q318.6 488.6 320.4 486.6 M314.8 502.9 H324.6" fill="none" stroke="#f4f4f4" stroke-width="2"/>
</svg>
</body></html>
